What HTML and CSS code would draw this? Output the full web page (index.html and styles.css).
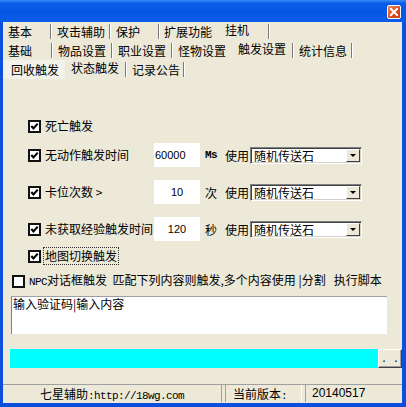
FILE: index.html
```html
<!DOCTYPE html>
<html>
<head>
    <title>七星辅助</title>
    <link rel="stylesheet" href="styles.css">
</head>
<body>
    <div class="window">
        <div class="titlebar">
            <span class="close">
                <svg width="14" height="14" viewBox="0 0 14 14">
                    <path d="M4 4 L10 10 M10 4 L4 10" stroke="#fff" stroke-width="2" stroke-linecap="square"/>
                </svg>
            </span>
        </div>

        <div class="client">
            <div class="tabrow r1">
                <div class="tab sep">基本</div>
                <div class="tab sep">攻击辅助</div>
                <div class="tab sep">保护</div>
                <div class="tab">扩展功能</div>
                <div class="tab on sep">挂机</div>
            </div>
            <div class="tabrow r2">
                <div class="tab sep">基础</div>
                <div class="tab sep">物品设置</div>
                <div class="tab sep">职业设置</div>
                <div class="tab">怪物设置</div>
                <div class="tab on sep">触发设置</div>
                <div class="tab sep">统计信息</div>
            </div>
            <div class="tabrow r3">
                <div class="tab first">回收触发</div>
                <div class="tab on sep">状态触发</div>
                <div class="tab sep">记录公告</div>
            </div>

            <div class="panel">
                <div class="row row-a">
                    <span class="cb checked"></span>
                    <span class="lbl">死亡触发</span>
                </div>

                <div class="row row-b">
                    <span class="cb checked"></span>
                    <span class="lbl wide">无动作触发时间</span>
                    <span class="edit left">60000</span>
                    <span class="tail"><span class="mono bold">Ms</span><span>使用</span></span>
                    <span class="combo">随机传送石<span class="drop"></span></span>
                </div>

                <div class="row row-c">
                    <span class="cb checked"></span>
                    <span class="lbl wide">卡位次数 &gt;</span>
                    <span class="edit">10</span>
                    <span class="tail"><span>次</span><span>使用</span></span>
                    <span class="combo">随机传送石<span class="drop"></span></span>
                </div>

                <div class="row row-d">
                    <span class="cb checked"></span>
                    <span class="lbl wide">未获取经验触发时间</span>
                    <span class="edit">120</span>
                    <span class="tail"><span>秒</span><span>使用</span></span>
                    <span class="combo">随机传送石<span class="drop"></span></span>
                </div>

                <div class="row row-e">
                    <span class="cb checked"></span>
                    <span class="lbl focus">地图切换触发</span>
                </div>

                <div class="row row-f">
                    <span class="cb"></span>
                    <span class="lbl"><span class="mono">NPC</span>对话框触发&nbsp; 匹配下列内容则触发,多个内容使用 |分割&nbsp;&nbsp; 执行脚本</span>
                </div>

                <div class="memo">输入验证码|输入内容</div>

                <div class="progress-row">
                    <div class="progress"></div>
                    <div class="more">. .</div>
                </div>
            </div>

            <div class="statusbar">
                <div class="pane site">七星辅助<span class="mono">:http://18wg.com</span></div>
                <div class="pane ver">当前版本<span class="mono">:</span></div>
                <div class="pane date">20140517</div>
            </div>
        </div>
    </div>
</body>
</html>
```

FILE: styles.css
```css
body {
    margin: 0;
    padding: 0;
    width: 406px;
    height: 407px;
    overflow: hidden;
    font-family: "Noto Sans CJK SC", "Liberation Sans", sans-serif;
    font-size: 12px;
    color: #000;
}

.window {
    width: 406px;
    height: 407px;
    box-sizing: border-box;
    background: #0b4fdc;
    padding: 0 4px 4px 3px;
    display: flex;
    flex-direction: column;
}

.titlebar {
    height: 22px;
    margin: 0 -4px 0 -3px;
    background: linear-gradient(#3d8ef6 0, #0b5de9 3px, #0556e2 55%, #0a5be8 100%);
    display: flex;
    justify-content: flex-end;
    align-items: flex-start;
    padding: 5px 5px 0 0;
    box-sizing: border-box;
}

.close {
    width: 14px;
    height: 14px;
    box-sizing: border-box;
    border: 1px solid #fff;
    border-radius: 2px;
    background: linear-gradient(135deg, #f08a63, #d9461c 60%, #c13a12);
    display: flex;
}

.close svg {
    margin: -1px;
}

.client {
    flex: 1;
    background: #ece9d8;
    display: flex;
    flex-direction: column;
}

/* tabs */
.tabrow {
    display: grid;
    height: 19px;
}

.r1 { grid-template-columns: 48px 59px 49px 60px 50px; }
.r2 { grid-template-columns: 49px 60px 60px 60px 61px 59px; }
.r3 { grid-template-columns: 62px 61px 58px; }

.tab {
    line-height: 19px;
    height: 19px;
    padding-left: 5px;
    white-space: nowrap;
    box-sizing: border-box;
    position: relative;
}

.tab.sep::after {
    content: "";
    position: absolute;
    right: 0;
    top: 2px;
    bottom: 2px;
    width: 1px;
    background: #7a7a7a;
    box-shadow: 1px 0 0 #fff;
}

.r1 .tab:nth-child(2), .r1 .tab:nth-child(3), .r2 .tab:nth-child(n+2) {
    padding-left: 6px;
}

.r3 .tab { padding-left: 6px; }
.r3 .tab.first { padding-left: 8px; background: #f3f2ea; }

.tab.on {
    line-height: 15px;
    padding-left: 6px;
}

/* panel */
.panel {
    display: flex;
    flex-direction: column;
}

.row {
    display: flex;
    align-items: center;
    padding-left: 25px;
    white-space: nowrap;
}

.row-a { height: 18px; margin-top: 38px; }
.row-b { height: 24px; margin-top: 8px; }
.row-c { height: 24px; margin-top: 13px; }
.row-d { height: 24px; margin-top: 13px; }
.row-e { height: 18px; margin-top: 6px; }
.row-f { height: 18px; margin-top: 7px; padding-left: 9px; }

.cb {
    width: 13px;
    height: 13px;
    box-sizing: border-box;
    border: 2px solid #111;
    background: #fff;
    flex: none;
    margin-right: 4px;
}

.cb.checked {
    background: #fff url("data:image/svg+xml;utf8,<svg xmlns='http://www.w3.org/2000/svg' width='9' height='9'><path d='M1.3 4 L3.5 6.5 L7.7 1.6' stroke='black' stroke-width='2.1' fill='none'/></svg>") center no-repeat;
}

.lbl {
    line-height: 16px;
}

.lbl.wide {
    width: 109px;
    flex: none;
}

.lbl.focus {
    outline: 1px dotted #333;
    outline-offset: 0;
    padding: 0 1px;
    margin-left: -1px;
}

.mono {
    font-family: "Liberation Mono", "DejaVu Sans Mono", monospace;
    font-size: 11px;
    letter-spacing: -0.6px;
}

.bold {
    font-weight: bold;
}

.edit {
    width: 46px;
    height: 24px;
    line-height: 24px;
    background: #fff;
    text-align: center;
    flex: none;
    font-family: "Liberation Sans", sans-serif;
    font-size: 11px;
}

.edit.left {
    text-align: left;
    padding-left: 1px;
    box-sizing: border-box;
}

.tail {
    width: 50px;
    box-sizing: border-box;
    padding: 0 1px 0 5px;
    display: flex;
    justify-content: space-between;
    align-items: center;
    flex: none;
}

.combo {
    width: 112px;
    height: 17px;
    box-sizing: border-box;
    background: #fff;
    border-top: 1px solid #808080;
    border-left: 1px solid #808080;
    border-right: 1px solid #fff;
    border-bottom: 1px solid #fff;
    box-shadow: inset 1px 1px 0 #404040, inset -1px -1px 0 #d4d0c8;
    line-height: 15px;
    padding-left: 3px;
    display: flex;
    justify-content: space-between;
    align-items: center;
    flex: none;
}

.drop {
    width: 14px;
    height: 13px;
    box-sizing: border-box;
    margin-right: 1px;
    background: #ece9d8;
    border-top: 1px solid #fff;
    border-left: 1px solid #fff;
    border-right: 1px solid #404040;
    border-bottom: 1px solid #404040;
    display: flex;
    align-items: center;
    justify-content: center;
}

.drop::after {
    content: "";
    border-left: 3px solid transparent;
    border-right: 3px solid transparent;
    border-top: 3px solid #000;
    margin-top: 1px;
}

.memo {
    margin: 6px 15px 0 8px;
    height: 37px;
    background: #fff;
    border-top: 1px solid #a0a0a0;
    border-left: 1px solid #808080;
    line-height: 14px;
    padding-left: 1px;
}

.progress-row {
    display: flex;
    margin: 15px 0 0 7px;
    height: 19px;
}

.progress {
    flex: 1;
    background: #00ffff;
}

.more {
    width: 24px;
    box-sizing: border-box;
    border-top: 1px solid #fff;
    border-left: 1px solid #fff;
    border-right: 1px solid #404040;
    border-bottom: 1px solid #404040;
    box-shadow: inset -1px -1px 0 #a0a0a0;
    font-family: "Liberation Mono", monospace;
    font-size: 10px;
    text-align: center;
    line-height: 20px;
}

/* status bar */
.statusbar {
    margin-top: auto;
    height: 18px;
    border-top: 1px solid #a0a0a0;
    display: flex;
    gap: 3px;
}

.pane {
    height: 17px;
    box-sizing: border-box;
    line-height: 17px;
    white-space: nowrap;
}

.site {
    width: 219px;
    text-align: center;
    border-right: 1px solid #a0a0a0;
}

.ver {
    width: 77px;
    padding-left: 7px;
    border-left: 1px solid #a0a0a0;
    border-right: 1px solid #fff;
}

.date {
    flex: 1;
    padding-left: 6px;
    border-left: 1px solid #a0a0a0;
    font-family: "Liberation Sans", sans-serif;
}
```
